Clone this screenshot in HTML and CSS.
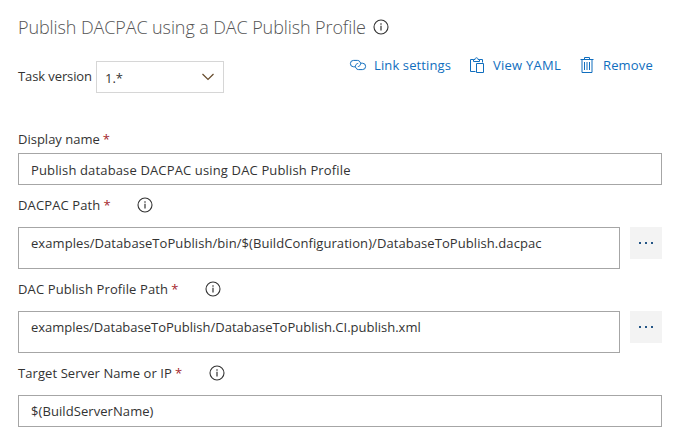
FILE: index.html
```html
<!DOCTYPE html>
<html lang="en">
<head>
<meta charset="utf-8">
<title>Publish DACPAC</title>
<link rel="stylesheet" href="styles.css">
</head>
<body>
<svg class="defs" aria-hidden="true">
  <symbol id="info" viewBox="0 0 16 16"><circle cx="8" cy="8" r="7" fill="none" stroke="currentColor" stroke-width="1.1"/><path d="M8 6.8V11.5M8 4.3V5.7" stroke="currentColor" stroke-width="1.2"/></symbol>
</svg>
<main class="panel">
  <header class="heading"><h1>Publish DACPAC using a DAC Publish Profile</h1><svg class="info"><use href="#info"/></svg></header>
  <div class="toolbar">
    <span class="version-label">Task version</span>
    <div class="select"><span>1.*</span><svg class="chevron" viewBox="0 0 12 8"><path d="M.5 1L6 6.5L11.5 1"/></svg></div>
    <nav class="actions">
      <a class="action link"><svg viewBox="0 0 18 14"><path d="M6 8.8H4.6A3.2 3.2 0 0 1 4.6 2.4H8.4A3.2 3.2 0 0 1 11.3 6.9C10.8 8 9.9 8.5 8.8 8.6"/><path d="M12 5.2H13.4A3.2 3.2 0 0 1 13.4 11.6H9.6A3.2 3.2 0 0 1 6.7 7.1C7.2 6 8.1 5.5 9.2 5.4"/></svg><span>Link settings</span></a>
      <a class="action yaml"><svg viewBox="0 0 16 16"><path d="M6.5 14.5H1.5V2.5H4.5M10.5 2.5H13.5V5.5M4.5 4.5V2.5H6C6 .2 9 .2 9 2.5H10.5V4.5ZM7.5 6.5H14.5V15.5H7.5Z"/></svg><span>View YAML</span></a>
      <a class="action remove"><svg viewBox="0 0 14 16"><path d="M.5 2.5H13.5M4.5 2.5V.5H9.5V2.5M2 2.5V15.5H12V2.5M4.5 5V13M7 5V13M9.5 5V13"/></svg><span>Remove</span></a>
    </nav>
  </div>
  <section class="field first">
    <div class="label"><span class="name display">Display name</span><b>*</b></div>
    <div class="input"><span class="title-value">Publish database DACPAC using DAC Publish Profile</span></div>
  </section>
  <section class="field">
    <div class="label"><span class="name dacpac">DACPAC Path</span><b>*</b><svg class="info"><use href="#info"/></svg></div>
    <div class="row"><div class="input tall"><span class="path-value">examples/DatabaseToPublish/bin/$(BuildConfiguration)/DatabaseToPublish.dacpac</span></div><button class="more" aria-label="Browse"><i></i><i></i><i></i></button></div>
  </section>
  <section class="field">
    <div class="label"><span class="name profile">DAC Publish Profile Path</span><b>*</b><svg class="info"><use href="#info"/></svg></div>
    <div class="row"><div class="input tall"><span>examples/DatabaseToPublish/DatabaseToPublish.CI.publish.xml</span></div><button class="more" aria-label="Browse"><i></i><i></i><i></i></button></div>
  </section>
  <section class="field">
    <div class="label"><span class="name server">Target Server Name or IP</span><b>*</b><svg class="info"><use href="#info"/></svg></div>
    <div class="input server-input"><span class="path-value">$(BuildServerName)</span></div>
  </section>
</main>
</body>
</html>
```
FILE: styles.css
```css
* { box-sizing: border-box; }
body { margin: 0; background: #fff; color: #333; font: 13px/20px "Open Sans", "Noto Sans", sans-serif; }
.defs { display: none; }
.panel { width: 644px; margin-left: 18px; padding-top: 12px; white-space: nowrap; }
.heading { display: flex; align-items: center; height: 30px; }
h1 { margin: 0; width: 355px; font-size: 18px; line-height: 30px; font-weight: 300; letter-spacing: -.1px; color: #555; }
.info { width: 16px; height: 16px; flex: none; color: #333; }
.toolbar { display: flex; align-items: flex-start; height: 85px; padding-top: 19px; }
.version-label { width: 78px; padding-top: 5px; letter-spacing: -.1px; }
.select { display: flex; justify-content: space-between; align-items: center; width: 128px; height: 32px; padding: 2px 9px 0 8px; border: 1px solid #d6d6d6; }
.chevron { width: 12px; height: 8px; margin-top: -3px; fill: none; stroke: #664b2c; stroke-width: 1.2; }
.actions { display: flex; margin-left: 125px; margin-top: -6px; color: #106ebe; }
.action { display: flex; align-items: center; height: 20px; }
.action svg { fill: none; stroke: currentColor; flex: none; }
.link { width: 120px; letter-spacing: .12px; }
.link svg { width: 18px; height: 14px; margin: 0 7px 0 0; }
.yaml { width: 111px; letter-spacing: .25px; }
.yaml svg { width: 16px; height: 16px; margin-right: 8px; }
.remove { letter-spacing: .15px; }
.remove svg { width: 14px; height: 16px; margin-right: 9px; }
.label { display: flex; align-items: center; height: 42px; padding-bottom: 3px; }
.first .label { height: 26px; padding-bottom: 2px; }
.label b { width: 7px; margin-left: 3px; font-weight: 400; color: #a4262c; }
.label .info { margin-left: 27px; margin-top: 1px; }
.dacpac { letter-spacing: .12px; }
.profile { letter-spacing: .12px; }
.server { letter-spacing: .08px; }
.title-value { letter-spacing: .145px; }
.path-value { letter-spacing: .075px; }
.input { height: 32px; flex: 1; padding: 6px 12px; line-height: 20px; border: 1px solid #a6a6a6; }
.tall.input { height: 42px; padding-top: 5px; }
.server-input { padding-top: 5px; }
.row { display: flex; gap: 10px; }
.more { display: flex; justify-content: center; gap: 4px; width: 32px; height: 32px; padding: 15px 0 0; border: 0; background: #f3f3f3; }
.more i { width: 2px; height: 2px; background: #245586; }
```
